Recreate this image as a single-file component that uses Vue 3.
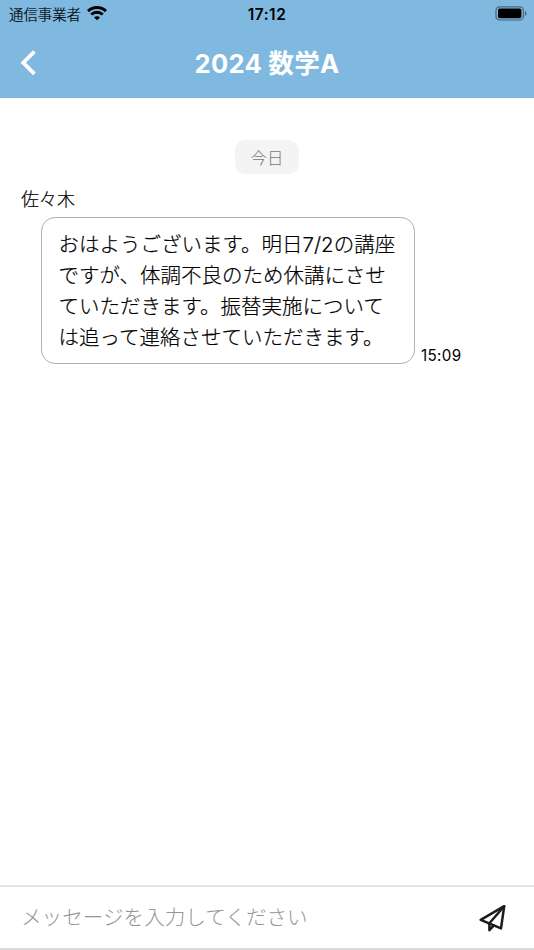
<script setup>
import { ref } from 'vue'

const draft = ref('')

const room = { title: '2024 数学A' }

const messages = [
  {
    id: 1,
    sender: '佐々木',
    time: '15:09',
    lines: [
      'おはようございます。明日7/2の講座',
      'ですが、体調不良のため休講にさせ',
      'ていただきます。振替実施について',
      'は追って連絡させていただきます。'
    ]
  }
]
</script>

<template>
  <div class="chat">
    <header class="header">
      <div class="status">
        <div class="status__carrier">
          <span>通信事業者</span>
          <svg class="status__wifi" viewBox="0 0 20 15" fill="none" stroke="#000">
            <path d="M1 5.1C6 .4 14 .4 19 5.1" stroke-width="3" />
            <path d="M4.2 8.5C7.4 5.5 12.6 5.5 15.8 8.5" stroke-width="2.8" />
            <path d="M10 14.3 7 11.4C8.7 9.8 11.3 9.8 13 11.4Z" fill="#000" stroke="none" />
          </svg>
        </div>
        <span class="status__clock">17:12</span>
        <svg class="status__battery" viewBox="0 0 32 15">
          <rect x="1" y=".8" width="27.4" height="13.2" rx="3.6" fill="none" stroke="#000" stroke-opacity=".45" stroke-width="1.2" />
          <rect x="3" y="2.6" width="23.4" height="9.6" rx="1.8" fill="#000" />
          <path d="M30 5v5c2-.7 2-4.3 0-5Z" fill="#000" fill-opacity=".45" />
        </svg>
      </div>
      <div class="nav">
        <button class="nav__back" type="button" aria-label="戻る">
          <svg viewBox="0 0 16 26" fill="none" stroke="#fff" stroke-width="3.8" stroke-linejoin="miter">
            <path d="M14.4 1.6 3.2 12.7 14.4 23.8" />
          </svg>
        </button>
        <h1 class="nav__title">{{ room.title }}</h1>
      </div>
    </header>

    <main class="messages">
      <div class="messages__date">今日</div>
      <article v-for="message in messages" :key="message.id" class="message">
        <div class="message__sender">{{ message.sender }}</div>
        <div class="message__row">
          <div class="message__bubble">
            <div v-for="line in message.lines" :key="line">{{ line }}</div>
          </div>
          <time class="message__time">{{ message.time }}</time>
        </div>
      </article>
    </main>

    <form class="composer" @submit.prevent>
      <input v-model="draft" class="composer__input" type="text" placeholder="メッセージを入力してください" />
      <button class="composer__send" type="submit" aria-label="送信">
        <svg viewBox="0 0 28 28" fill="none" stroke="#1c1c1c" stroke-width="2.5" stroke-linejoin="round" stroke-linecap="round">
          <path d="M25.2 2.2 1.7 15.8 22 24.4Z" />
          <path d="M25.2 2.2 10.4 19.2V26.2L14.8 21.4" />
        </svg>
      </button>
    </form>
  </div>
</template>

<style>
body {
  margin: 0;
}
</style>

<style scoped>
.chat {
  display: flex;
  flex-direction: column;
  box-sizing: border-box;
  width: 100%;
  height: 100vh;
  overflow: hidden;
  background: #fff;
  color: #000;
  font-family: Inter, "Noto Sans CJK JP", sans-serif;
}

.header {
  flex: none;
  height: 98px;
  background: #7fb9df;
}

.status {
  display: grid;
  grid-template-columns: 1fr auto 1fr;
  align-items: center;
  height: 28px;
  padding: 0 7px 0 9px;
  font-size: 14.4px;
  line-height: 28px;
}

.status__carrier {
  display: flex;
  align-items: center;
  gap: 6px;
  font-weight: 300;
  -webkit-text-stroke: 0.2px;
}

.status__carrier span {
  padding-top: 1px;
}

.status__wifi {
  width: 20px;
  height: 15px;
  margin-bottom: 2px;
}

.status__clock {
  margin-right: 2px;
  font-size: 15.4px;
  font-weight: 600;
  letter-spacing: 0.55px;
}

.status__battery {
  justify-self: end;
  width: 32px;
  height: 15px;
  margin-bottom: 2px;
}

.nav {
  display: grid;
  grid-template-columns: 60px 1fr 60px;
  align-items: center;
  height: 70px;
}

.nav__back {
  display: flex;
  padding: 0 0 0 20px;
  border: 0;
  background: none;
}

.nav__back svg {
  width: 16px;
  height: 26px;
}

.nav__title {
  margin: 2px 0 0;
  color: #fff;
  font-size: 25.6px;
  font-weight: 700;
  letter-spacing: 0.25px;
  line-height: 38px;
  text-align: center;
}

.messages {
  flex: 1;
  display: flex;
  flex-direction: column;
  padding: 42px 21px 0;
}

.messages__date {
  align-self: center;
  box-sizing: border-box;
  width: 64px;
  height: 34px;
  padding-top: 1px;
  border-radius: 10px;
  background: #f4f4f4;
  color: #777;
  font-size: 16.4px;
  font-weight: 300;
  line-height: 34px;
  text-align: center;
}

.message {
  margin-top: 12px;
}

.message__sender {
  font-size: 18px;
  font-weight: 300;
  line-height: 28px;
  -webkit-text-stroke: 0.2px;
}

.message__row {
  display: flex;
  align-items: flex-end;
  gap: 6px;
  margin: 3px 0 0 20px;
}

.message__bubble {
  box-sizing: border-box;
  width: 374px;
  height: 147px;
  padding: 11px 16.5px;
  border: 1.4px solid #b0b0b0;
  border-radius: 14px;
  font-size: 20.5px;
  font-weight: 300;
  line-height: 31px;
  white-space: nowrap;
  -webkit-text-stroke: 0.2px;
}

.message__time {
  font-size: 15.2px;
  letter-spacing: 0.35px;
  line-height: 17px;
}

.composer {
  flex: none;
  display: flex;
  align-items: center;
  justify-content: space-between;
  box-sizing: border-box;
  height: 65px;
  padding: 0 27px 0 21px;
  border-top: 2px solid #e4e4e4;
  border-bottom: 2px solid #dcdcdc;
}

.composer__input {
  flex: 1;
  min-width: 0;
  padding: 1px 0 0;
  border: 0;
  outline: 0;
  background: none;
  font: 300 20.6px/30px Inter, "Noto Sans CJK JP", sans-serif;
}

.composer__input::placeholder {
  color: #959595;
  opacity: 1;
}

.composer__send {
  display: flex;
  padding: 0;
  border: 0;
  background: none;
}

.composer__send svg {
  width: 28px;
  height: 28px;
}
</style>
